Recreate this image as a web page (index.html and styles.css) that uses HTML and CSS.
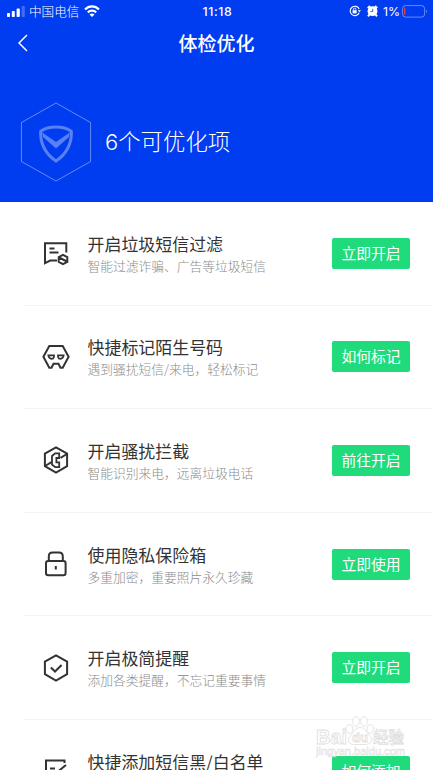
FILE: index.html
```html
<!DOCTYPE html>
<html lang="zh-CN">
<head>
<meta charset="UTF-8" />
<meta name="viewport" content="width=device-width, initial-scale=1" />
<title>体检优化</title>
<link rel="stylesheet" href="styles.css">
</head>
<body>

<header class="top">
  <div class="status">
    <div class="status-left">
      <svg class="signal" width="18" height="11" viewBox="0 0 18 11" fill="#fff">
        <rect x="0" y="7" width="3" height="4" rx="0.8"/>
        <rect x="4.8" y="5" width="3" height="6" rx="0.8"/>
        <rect x="9.6" y="2.6" width="3.2" height="8.4" rx="0.8"/>
        <rect x="14.6" y="0" width="3.2" height="11" rx="0.8" opacity="0.25"/>
      </svg>
      <span class="carrier">中国电信</span>
      <svg class="wifi" width="16" height="12" viewBox="0 0 16 12" fill="none" stroke="#fff" stroke-width="2.2">
        <path d="M1 4.5C5 0.4 11 0.4 15 4.5"/>
        <path d="M3.8 7.4C6.2 5 9.8 5 12.2 7.4"/>
        <path d="M8 12L5.5 9.5Q8 7.4 10.5 9.5Z" fill="#fff" stroke="none"/>
      </svg>
    </div>
    <span class="time">11:18</span>
    <div class="status-right">
      <svg width="12" height="12" viewBox="0 0 12 12" fill="none" stroke="#fff" stroke-width="1.1">
        <path d="M10.2 7.8A4.7 4.7 0 1 1 10.2 4"/>
        <path d="M8.7 5.2H12L10.4 7.3Z" fill="#fff" stroke="none"/>
        <rect x="3.6" y="5.2" width="4" height="3.2" fill="#fff" stroke="none"/>
        <path d="M4.4 5.4V4.3A1.2 1.2 0 0 1 6.8 4.3V5.4" stroke-width="0.9"/>
      </svg>
      <svg class="alarm" width="11" height="12" viewBox="0 0 11 12">
        <circle cx="5.5" cy="6.2" r="4.9" fill="#fff"/>
        <path d="M0.8 3.2L3 1M10.2 3.2L8 1M2.4 9.5L1 11.3M8.6 9.5L10 11.3" stroke="#fff" stroke-width="2"/>
        <path d="M5.7 3.8V6.6H3.3" fill="none" stroke="#003cf0" stroke-width="0.8"/>
      </svg>
      <span class="percent">1%</span>
      <svg width="26" height="13" viewBox="0 0 26 13" fill="none">
        <rect x="0.6" y="0.6" width="22" height="11.5" rx="3" stroke="#fff" stroke-opacity="0.4"/>
        <rect x="2.1" y="2.6" width="1.3" height="7.2" rx="0.5" fill="#ff3b30"/>
        <path d="M24.2 4.5Q26 6.4 24.2 8.3Z" fill="#fff" fill-opacity="0.5"/>
      </svg>
    </div>
  </div>

  <nav class="navbar">
    <svg class="back" width="10" height="18" viewBox="0 0 10 18" fill="none" stroke="#fff" stroke-width="1.5">
      <path d="M9 1L1 9L9 17"/>
    </svg>
    <h1>体检优化</h1>
  </nav>

  <div class="summary">
    <svg width="72" height="80" viewBox="0 0 72 80" fill="none" stroke="#fff">
      <path d="M36 1L70.6 20.5V59.5L36 79L1.4 59.5V20.5Z" stroke-opacity="0.4"/>
      <path d="M36 25C42 25 47.5 26.5 51.3 29.2C52.2 40 47 52 36 59C25 52 19.8 40 20.7 29.2C24.5 26.5 30 25 36 25Z" stroke-opacity="0.35" stroke-width="3"/>
      <path d="M22.3 30.5L36 40L49.7 30.5L49 35L36 46.5L23 35Z" fill="#fff" fill-opacity="0.35" stroke="none"/>
    </svg>
    <p><span class="count">6</span>个可优化项</p>
  </div>
</header>

<ul class="list">
  <li class="item">
    <svg class="icon" viewBox="0 0 28 28">
      <path d="M24.3 13.5V4.3H3V24.2L8.2 21.6H15"/>
      <path d="M7.5 9.6H12.5M7.5 13.6H16.5" />
      <path d="M21 15.9L25.3 18.2V22.8L21 25.1L16.7 22.8V18.2ZM17 18.5L25 22.5"/>
    </svg>
    <div class="text"><h2>开启垃圾短信过滤</h2><p>智能过滤诈骗、广告等垃圾短信</p></div>
    <button>立即开启</button>
  </li>
  <li class="item">
    <svg class="icon" viewBox="0 0 28 28">
      <path d="M7.3 3H20.7L26.6 13.8L20.7 24.7H18.5L16.5 20.7H11.5L9.5 24.7H7.3L1.4 13.8Z"/>
      <path d="M6.3 12.4H12V13.6Q11.6 15.8 9.5 15.8Q7 15.8 6.3 12.4ZM21.7 12.4H16V13.6Q16.4 15.8 18.5 15.8Q21 15.8 21.7 12.4Z" stroke-width="1.7"/>
    </svg>
    <div class="text"><h2>快捷标记陌生号码</h2><p>遇到骚扰短信/来电，轻松标记</p></div>
    <button>如何标记</button>
  </li>
  <li class="item">
    <svg class="icon" viewBox="0 0 28 28">
      <path d="M14 1.4L25.1 7.7V20.2L14 26.6L2.9 20.2V7.7Z"/>
      <path d="M3 20L9.5 16.2M18.5 11.8L25 8"/>
      <path d="M17.2 7.3H13.2L10 10V18.5L13.2 21.2H17.2V16.4H14.4V12H17.2Z" stroke-width="1.8"/>
    </svg>
    <div class="text"><h2>开启骚扰拦截</h2><p>智能识别来电，远离垃圾电话</p></div>
    <button>前往开启</button>
  </li>
  <li class="item">
    <svg class="icon" viewBox="0 0 28 28">
      <rect x="4" y="11" width="19.6" height="14.2" rx="2.2"/>
      <path d="M6.8 11V6.2Q6.8 2.4 10.5 2.4H17Q20.8 2.4 20.8 6.2V11M13.8 16V19.6"/>
    </svg>
    <div class="text"><h2>使用隐私保险箱</h2><p>多重加密，重要照片永久珍藏</p></div>
    <button>立即使用</button>
  </li>
  <li class="item">
    <svg class="icon" viewBox="0 0 28 28">
      <path d="M14 1.4L25.1 7.7V20.2L14 26.6L2.9 20.2V7.7Z"/>
      <path d="M8.9 13.5L13 17.5L19.6 11"/>
    </svg>
    <div class="text"><h2>开启极简提醒</h2><p>添加各类提醒，不忘记重要事情</p></div>
    <button>立即开启</button>
  </li>
  <li class="item">
    <svg class="icon" viewBox="0 0 28 28">
      <path d="M22.5 6V3.5H4V24L9 21.4H23V13"/>
      <path d="M8 11.5H13M24 8L16 14.5"/>
    </svg>
    <div class="text"><h2>快捷添加短信黑/白名单</h2></div>
    <button>如何添加</button>
  </li>
</ul>

<!-- watermark -->
<svg class="watermark" width="96" height="46" viewBox="0 0 96 46">
  <g fill="#fff" fill-opacity="0.8" stroke="#dedede" stroke-width="0.8">
    <text class="wm-latin" x="2" y="29" font-size="20" textLength="31">Bai</text>
    <ellipse cx="35.5" cy="14" rx="3.3" ry="4.3" transform="rotate(-15 35.5 14)"/>
    <ellipse cx="42" cy="6.5" rx="3.3" ry="4.7"/>
    <ellipse cx="50" cy="6.5" rx="3.3" ry="4.7"/>
    <ellipse cx="56.3" cy="14" rx="3.3" ry="4.3" transform="rotate(15 56.3 14)"/>
    <path d="M46 12.5C51 12.5 52.5 17.5 56.5 21.5C60 25.5 56 29.5 51 29.5H40C35 29.5 32.5 25.5 36 21.5C40 17.5 41 12.5 46 12.5Z"/>
    <text class="wm-latin" x="38" y="27" font-size="13" textLength="16">du</text>
    <text class="wm-cjk" x="59" y="28" font-size="15.5" textLength="31">经验</text>
    <text class="wm-latin wm-url" x="2" y="40" font-size="10.5" stroke-width="0.5" textLength="89" lengthAdjust="spacingAndGlyphs">jingyan.baidu.com</text>
  </g>
</svg>

</body>
</html>
```
FILE: styles.css
```css
* { box-sizing: border-box; }
body { margin: 0; height: 770px; overflow: hidden; position: relative; background: #fff; font-family: "Liberation Sans", "Noto Sans CJK SC", sans-serif; }
h1, h2, p, ul { margin: 0; padding: 0; }
svg { display: block; flex: none; }

.top { height: 202px; background: #003cf0; color: #fff; }
.status { height: 22px; display: grid; grid-template-columns: 1fr auto 1fr; align-items: center; padding: 0 5px 0 7px; }
.status-left, .status-right { display: flex; align-items: center; }
.status-right { justify-content: flex-end; }
.carrier { margin: 0 5px 0 4px; font-size: 12.6px; line-height: 20px; padding-bottom: 1px; font-family: "Noto Sans CJK SC", sans-serif; font-weight: 300; }
.time { font-family: Inter, sans-serif; font-size: 12.3px; font-weight: 500; letter-spacing: 0.6px; }
.alarm { margin: 0 5px 0 6px; }
.percent { margin-right: 2px; font-family: Inter, sans-serif; font-size: 12.3px; font-weight: 400; }

.navbar { height: 42px; display: grid; grid-template-columns: 1fr auto 1fr; align-items: center; padding: 0 18px; }
.navbar h1 { font-size: 19px; line-height: 24px; font-weight: 500; font-family: "Noto Sans CJK SC", sans-serif; }

.summary { display: flex; align-items: center; gap: 13px; padding: 38px 0 0 20px; }
.summary p { padding-bottom: 2px; font-family: "Noto Sans CJK SC", sans-serif; font-size: 22.4px; line-height: 30px; font-weight: 300; }
.count { font-family: Inter, sans-serif; font-size: 22px; }

.list { list-style: none; height: 568px; overflow: hidden; }
.item { display: flex; align-items: center; height: 103.6px; margin-left: 23px; padding: 0 23px 0 19px; border-bottom: 1px solid #f3f3f3; }
.icon { width: 28px; height: 28px; fill: none; stroke: #333; stroke-width: 2; }
.text { flex: 1; height: 45px; margin-left: 17.5px; font-family: "Noto Sans CJK SC", sans-serif; white-space: nowrap; }
.text h2 { font-size: 16.95px; line-height: 25px; font-weight: 400; color: #333; }
.text p { font-size: 12.75px; line-height: 20px; font-weight: 300; color: #8c8c8c; }
.item button { width: 78px; height: 31px; padding: 0 0 2px; border: none; border-radius: 2px; background: #1fdb7c; color: #fff; font-family: "Noto Sans CJK SC", sans-serif; font-size: 14.8px; line-height: 29px; }

.watermark { position: absolute; left: 314px; top: 715px; }
.wm-latin { font-family: "Liberation Sans", sans-serif; font-weight: bold; }
.wm-url { font-weight: normal; }
.wm-cjk { font-family: "Noto Sans CJK SC", sans-serif; font-weight: 500; }
```
